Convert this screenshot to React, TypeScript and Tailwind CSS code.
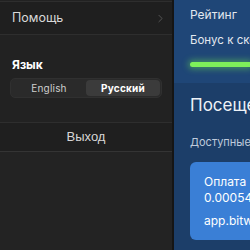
import { ChevronRight } from 'lucide-react'

const font = { fontFamily: 'Inter, "Noto Sans", sans-serif' }

export default function App() {
  return (
    <div className="flex h-[250px] w-[250px] overflow-hidden bg-[#232323]" style={font}>
      <aside className="flex w-[174px] shrink-0 flex-col border-r-2 border-[#151515] bg-[#222222]">
        <div className="mt-px flex h-[34px] items-center justify-between border-y border-[#2e2e2e] bg-[#1f1f1f] pl-3 pr-[5px]">
          <span className="text-[12.5px] text-[#d8d8d8]">Помощь</span>
          <ChevronRight className="h-[13px] w-[13px] text-[#5f5f5f]" strokeWidth={1.5} />
        </div>
        <div className="flex h-[88px] flex-col border-b border-[#2e2e2e] px-[10px] pt-[22px]">
          <span className="pl-[2px] text-[12px] font-bold leading-[16px] text-white">Язык</span>
          <div className="mt-[5px] flex h-[20px] rounded-[5px] border border-[#303030] bg-[#2a2a2a] p-px">
            <button className="flex-1 text-[10px] tracking-[0.2px] text-[#cfcfcf]" type="button">
              English
            </button>
            <button className="flex-1 rounded-[4px] bg-[#3b3b3b] text-[10px] font-bold tracking-[0.2px] text-white" type="button">
              Русский
            </button>
          </div>
        </div>
        <button
          className="flex h-[29px] items-center justify-center border-b border-[#343434] bg-[#1f1f1f] text-[13px] text-[#d6d6d6]"
          style={{ fontFamily: '"Liberation Sans", Arial, sans-serif' }}
          type="button"
        >
          Выход
        </button>
        <div className="flex-1 bg-[#232323]" />
      </aside>

      <main className="flex min-w-0 flex-1 flex-col bg-[#1c3e69]">
        <section className="flex h-[83px] flex-col bg-[#1f4677] pl-4 pt-[7px]">
          <span className="whitespace-nowrap text-[12px] leading-[16px] text-[#e3e8ef]">Рейтинг</span>
          <span className="mt-[9px] whitespace-nowrap text-[11.5px] leading-[16px] text-[#e3e8ef]">Бонус к скорости</span>
          <div className="mt-[14px] h-[5px] rounded-l-full bg-[#7ef05a] shadow-[0_0_6px_2px_rgba(110,230,80,0.45)]" />
        </section>
        <section className="flex flex-col pl-4 pt-[11px]">
          <span className="whitespace-nowrap text-[17px] leading-[22px] text-[#eef2f7]">Посещения</span>
          <span className="mt-[18px] whitespace-nowrap text-[11px] leading-[16px] text-[#bfcadb]">Доступные посещения</span>
          <div className="mt-[12px] flex h-[78px] flex-col rounded-l-[6px] bg-[#3a7fd6] pl-[14px] pt-[12px] text-white">
            <span className="whitespace-nowrap text-[12px] leading-[15px]">Оплата</span>
            <span className="mt-px whitespace-nowrap text-[12px] leading-[15px]">0.00054 BTC</span>
            <span className="mt-[8px] whitespace-nowrap text-[12px] leading-[15px]">app.bitwallet.io</span>
          </div>
        </section>
      </main>
    </div>
  )
}
